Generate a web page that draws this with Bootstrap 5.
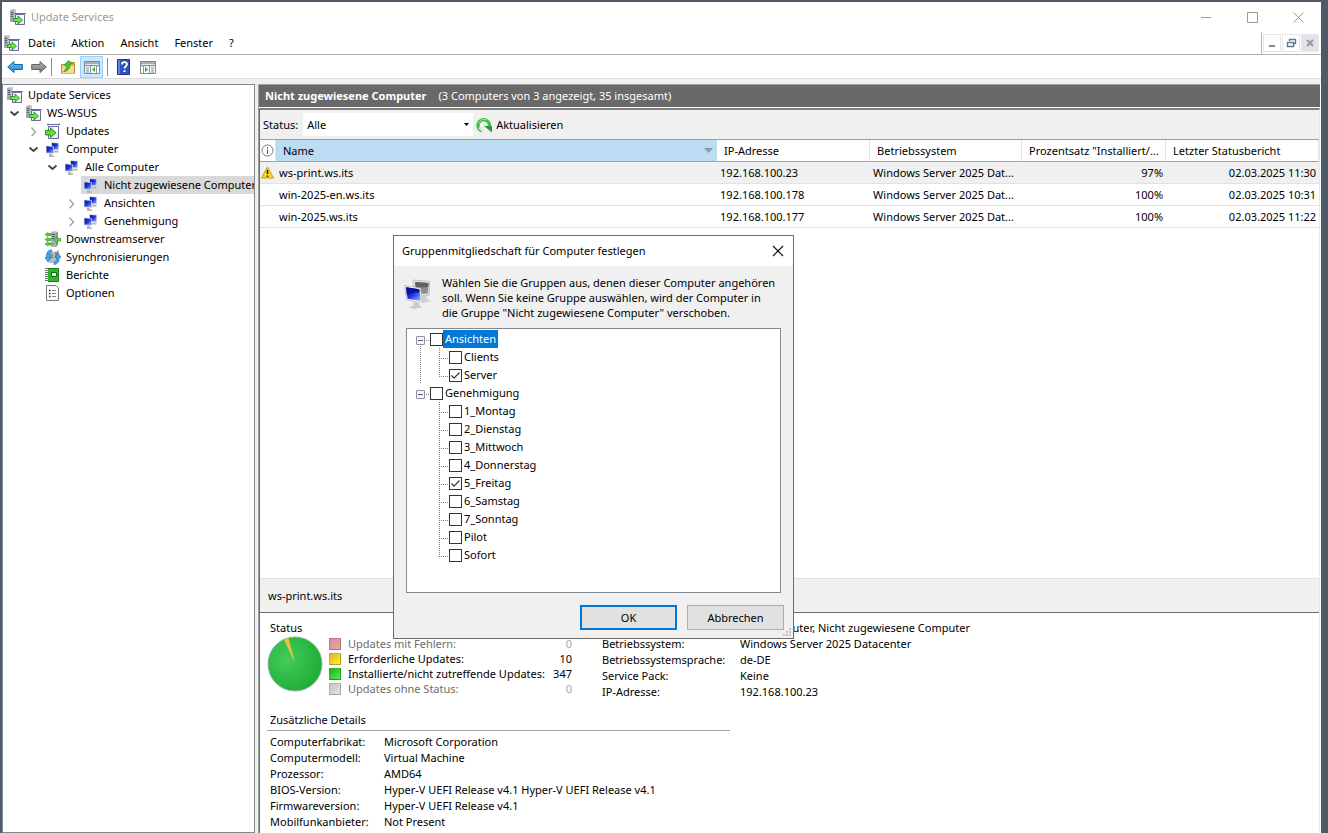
<!DOCTYPE html>
<html lang="de">
<head>
<meta charset="utf-8">
<meta name="viewport" content="width=device-width, initial-scale=1">
<title>Update Services</title>
<link href="https://cdn.jsdelivr.net/npm/bootstrap@5.3.0/dist/css/bootstrap.min.css" rel="stylesheet">
<style>
  :root { --ui-line:#a0a0a0; --ui-dark:#696969; --ui-face:#f0f0f0; --ui-field:#828790; --ui-soft:#e2e2e2; }
  body { font-family:"Noto Sans","Segoe UI",sans-serif; font-size:11px; line-height:16px; color:#000; background:#4f5a69; padding:2px 7px 0 2px; }
  svg { display:block; flex:none; }
  button { font:inherit; color:inherit; }
  ul { list-style:none; margin:0; padding:0; }
  .plain-btn { border:0; background:none; padding:0; }

  .titlebar { height:30px; padding:0 17px 0 8px; gap:5px; color:#999; }
  .window-btns { gap:35px; }
  .menubar { height:23px; }
  .menu-items { border-bottom:1px solid #b4b4b4; border-right:1px solid #b4b4b4; padding-left:2px; }
  .menu-items button { margin-right:16px; }
  .mdi { border-bottom:1px solid #b4b4b4; padding:2px 2px 0 1px; gap:1px; }
  .mdi button { width:18px; height:18px; border:1px solid #e6e6e6; background:#fff; padding:0; }
  .mdi button:last-child { background:#e3e3e3; }
  .toolbar { height:24px; border-bottom:1px solid #dcdcdc; padding-left:5px; }
  .tool-sep { width:1px; height:18px; margin:0 8px 0 4px; background:#8c8c8c; }
  .tool-on { width:23px; height:22px; background:#cce8ff; border:1px solid #99d1ff; padding:0; }
  .workspace { background:var(--ui-face); padding-top:5px; }

  .nav-tree { width:253px; border:1px solid var(--ui-field); background:#fff; padding:1px 0 0 4px; margin-right:3px; overflow:hidden; white-space:nowrap; }
  .node { display:flex; align-items:center; height:18px; }
  .node .twist { width:19px; padding-left:1px; }
  .node span { padding-left:5px; }
  .kids { padding-left:19px; }
  .picked { background:#d9d9d9; margin-left:17px; padding-left:2px; overflow:hidden; }

  .result { border-left:1px solid var(--ui-line); background:#fff; padding-right:1px; }
  .result-head { height:23px; background:var(--ui-dark); border-top:1px solid var(--ui-line); color:#fff; padding-left:6px; margin-bottom:1px; }
  .result-body { border:solid var(--ui-dark); border-width:2px 1px 0 1px; border-top-color:#808080; border-right-color:#e8e8e8; }
  .filterbar { height:30px; background:var(--ui-face); border-bottom:1px solid var(--ui-line); padding-left:3px; }
  .filterbar .form-select { width:170px; height:23px; border:0; border-radius:0; font-size:11px; line-height:16px; padding:0 20px 0 4px; color:#000;
    background:#fff url("data:image/svg+xml,%3Csvg xmlns='http://www.w3.org/2000/svg' viewBox='0 0 5 3'%3E%3Cpath d='M0 0h5L2.5 3z'/%3E%3C/svg%3E") no-repeat right 4px center/5px 3px; margin:0 3px 0 5px; }

  .hosts { table-layout:fixed; border-collapse:separate; border-spacing:0; margin:0; color:#000; }
  .hosts th, .hosts td { height:22px; padding:0 3px; font-weight:400; white-space:nowrap; overflow:hidden; text-overflow:ellipsis; border-bottom:1px solid var(--ui-soft); color:#000; }
  .hosts th { padding-left:7px; border-bottom-color:var(--ui-line); border-right:1px solid var(--ui-soft); }
  .hosts .flag { padding:0 0 0 1px; }
  .hosts th.sorted { background:#bcdcf4; border-right-color:#bcdcf4; }
  .hosts .hot td { background:#f0f0f0; }
  .c-flag { width:16px; } .c-ip { width:153px; } .c-os { width:152px; } .c-pct { width:144px; } .c-date { width:153px; }

  .detail-head { height:35px; background:var(--ui-face); border-top:1px solid var(--ui-soft); border-bottom:1px solid var(--ui-dark); padding-left:8px; }
  .detail { padding:7px 7px 3px; height:220px; }
  .status-part { width:335px; }
  .inset { padding-left:3px; }
  .status-row { gap:6px; }
  .legend { width:243px; }
  .legend td { height:15px; line-height:15px; padding:0; white-space:nowrap; }
  .legend td:first-child { width:19px; }
  .legend .off { color:#6d6d6d; } .legend .off td:last-child { color:#9aa9bd; }
  .swatch { width:12px; height:12px; border:1px solid #0003; }
  .sw-fail { background:linear-gradient(135deg,#d58f98,#eda5a5); }
  .sw-need { background:linear-gradient(135deg,#dfb428,#fdf02c); }
  .sw-done { background:linear-gradient(135deg,#1fae1f,#55f055); }
  .sw-none { background:linear-gradient(135deg,#c4c4c4,#e4e4e4); }
  .facts td, .facts th { padding:0; font-weight:400; white-space:nowrap; }
  .facts th { width:138px; }
  .more { margin-left:3px; }
  .more th { width:114px; }
  .more-head { width:463px; border-bottom:1px solid var(--ui-line); padding:12px 0 2px 3px; margin-bottom:3px; }

  .group-dialog { position:absolute; left:393px; top:235px; width:401px; border:1px solid #6b6b6b; background:var(--ui-face); }
  .dialog-title { height:30px; background:#fff; padding:0 9px 0 8px; }
  .dialog-text { line-height:15px; padding:9px 8px 8px 10px; gap:10px; white-space:nowrap; }
  .group-tree { height:265px; margin:0 12px; border:1px solid var(--ui-field); background:#fff; padding:1px 0 0 9px; }
  .group-row { display:flex; align-items:center; height:18px; }
  .group-row .form-check-input { width:13px; height:13px; margin:0; border:1px solid #333; border-radius:0; background-color:#fff; flex:none; }
  .group-row .form-check-input:checked { background-image:url("data:image/svg+xml,%3Csvg xmlns='http://www.w3.org/2000/svg' viewBox='0 0 11 11'%3E%3Cpath d='M1.5 5.5l2.5 2.7L9.5 2.5' fill='none' stroke='%23333' stroke-width='1.2'/%3E%3C/svg%3E"); }
  .group-row label { padding:0 2px; line-height:18px; }
  .group-row .chosen { background:#0078d7; color:#fff; }
  .fold { width:9px; height:9px; margin-top:3px; border:1px solid #919191; border-radius:1px; background:linear-gradient(#4b63a7,#4b63a7) center/5px 1px no-repeat #f4f4f4; padding:0; }
  .stub { width:5px; height:1px; margin-top:3px; background:repeating-linear-gradient(90deg,transparent 0 1px,#808080 1px 2px); }
  .trunk { background:repeating-linear-gradient(#808080 0 1px,transparent 1px 2px) 4px 14px/1px 100% no-repeat; }
  .leaves { padding-left:23px; }
  .twig { width:10px; height:18px; background:repeating-linear-gradient(90deg,#808080 0 1px,transparent 1px 2px) 0 10px/10px 1px no-repeat, repeating-linear-gradient(#808080 0 1px,transparent 1px 2px) 0 0/1px 100% no-repeat; }
  li:last-child > .group-row > .twig { background-size:10px 1px,1px 11px; }
  .dialog-buttons { padding:12px 9px 8px; gap:10px; }
  .dialog-buttons .btn { width:97px; height:25px; padding:0; font-size:11px; line-height:16px; border:1px solid #adadad; border-radius:0; background:#e1e1e1; color:#000; }
  .dialog-buttons .btn-main { border:2px solid #0078d7; }
  .grip { position:absolute; right:1px; bottom:1px; }
</style>
</head>
<body class="vh-100 d-flex flex-column overflow-hidden">

<svg width="0" height="0" class="position-absolute" aria-hidden="true">
  <defs>
    <linearGradient id="scr" x1="0" y1="0" x2="1" y2="1"><stop offset="0" stop-color="#0a12a8"/><stop offset=".5" stop-color="#1d35d8"/><stop offset="1" stop-color="#9fb6f5"/></linearGradient>
    <linearGradient id="blu" x1="0" y1="0" x2="0" y2="1"><stop offset="0" stop-color="#6cc5f5"/><stop offset="1" stop-color="#1a7fd0"/></linearGradient>
    <linearGradient id="gry" x1="0" y1="0" x2="0" y2="1"><stop offset="0" stop-color="#b5b5b5"/><stop offset="1" stop-color="#777"/></linearGradient>
    <radialGradient id="pieg" cx=".35" cy=".4" r=".7"><stop offset="0" stop-color="#45cc58"/><stop offset="1" stop-color="#1cab38"/></radialGradient>
    <symbol id="i-wsus" viewBox="0 0 16 16">
      <path d="M0 1l2-1h4v13H0z" fill="#c9cdd1"/><path d="M0 1.500h4V13H0z" fill="#a4aab0"/><path d="M1 3.500h2M1 5.500h2M1 7.500h2" stroke="#555f69"/><path d="M1 10.500h1" stroke="#3fbf3f"/>
      <path d="M5.500 5.500h9v10h-9z" fill="#eeeef8" stroke="#6a6aa0"/><path d="M4 4.500h12" stroke="#6a6aa0"/><path d="M9 6h5v5H9z" fill="#fff"/>
      <path d="M3.500 9.500h4.500V7l4.500 4L8 15v-2.500H3.500z" fill="#6be840" stroke="#1c8a1c" stroke-width=".8"/>
    </symbol>
    <symbol id="i-upd" viewBox="0 0 16 16">
      <path d="M3.500 3.500h10v12h-10z" fill="#e9e9f3" stroke="#6a6aa0"/><path d="M2 1.500h13M3 .5v2M14 .5v2" stroke="#6a6aa0"/><path d="M9 4h4v5H9z" fill="#fff"/>
      <path d="M.5 7.500h5V5l5.500 4.700L5.500 14.500V12h-5z" fill="#5fe038" stroke="#1c8a1c" stroke-width=".9"/>
    </symbol>
    <symbol id="i-pcs" viewBox="0 0 16 16">
      <path d="M6 1l8 .8v8L6 9.500z" fill="#d5d8e0"/><path d="M7 2l6.300.6v6L7 8z" fill="url(#scr)"/><path d="M9 10h4l1 1.500H9z" fill="#b4b4b4"/>
      <path d="M1 4.500l8 1v7.500l-8-.7z" fill="#cfd3dc"/><path d="M1.500 5.300l6.700.8v6l-6.700-.6z" fill="url(#scr)"/><path d="M4 13h3v1.500h2V16H4z" fill="#b5b5b5"/>
    </symbol>
    <symbol id="i-down" viewBox="0 0 16 16">
      <path d="M6 1l1-1h5l-1 1v14H6z" fill="#cdd0d3"/><path d="M6 1.500h5V16H6z" fill="#a9aeb3"/><path d="M7 3.500h3M7 5.500h3M7 7.500h3" stroke="#555f69"/><path d="M11 1.500l2-1V14l-2 2z" fill="#8e9499"/><path d="M7 13h2" stroke="#3fbf3f"/>
      <path d="M0 3.500l3-2v1h3v2H3v1zM0 8.500l3-2v1h3v2H3v1zM0 13l3-2v1h3v2H3v1zM9 8.500l3-3v2h4v2.500h-4v2z" fill="#5cd43a" stroke="#2b8e22" stroke-width=".6"/>
    </symbol>
    <symbol id="i-sync" viewBox="0 0 16 16">
      <path d="M4 4l5-2v12H4zM9 3l5-2v12l-5 2z" fill="#b9bdc1"/><path d="M5 6h3M5 8h3M10 4h3M10 6h3M10 8h3" stroke="#555f69"/>
      <path d="M6.500.8C3 1 1 4 1.500 8.500H0L3 13l3-4.500H4.300C4 6 4.500 4 6.500 3z" fill="#3fa9ee" stroke="#1463ab" stroke-width=".6"/>
      <path d="M9 15.500c3.500-.2 5.500-3.500 5.200-7H16l-3-4.500-3 4.500h1.700c.2 2.500-.7 4-2.700 5z" fill="#3fa9ee" stroke="#1463ab" stroke-width=".6"/>
    </symbol>
    <symbol id="i-book" viewBox="0 0 16 16">
      <path d="M1.500 1.500h12v13h-12z" fill="#32b432" stroke="#127a16"/><path d="M6.500 5.500h5v4h-5z" fill="#e9f6e2" stroke="#0e6a12"/><path d="M1.500 1v14" stroke="#fff" stroke-width="3"/><path d="M1.500 1v14" stroke="#5b7a5b" stroke-width="3" stroke-dasharray="1 1"/>
    </symbol>
    <symbol id="i-opt" viewBox="0 0 16 16">
      <path d="M1.500.5h9.500l2.500 2.500v12.500h-12z" fill="#fbfbfb" stroke="#7a7a7a"/><path d="M4 5.500h1.500M4 8.500h1.500M4 11.500h1.500" stroke="#333" stroke-width="1.500"/><path d="M7 5.500h4M7 8.500h4M7 11.500h4" stroke="#888"/>
    </symbol>
    <symbol id="i-open" viewBox="0 0 12 12"><path d="M2.500 4.500L6.500 8l4-3.500" fill="none" stroke="#404040" stroke-width="1.700"/></symbol>
    <symbol id="i-shut" viewBox="0 0 12 12"><path d="M4.500 2.500L8.500 7l-4 4.200" fill="none" stroke="#a6a6a6" stroke-width="1.500"/></symbol>
  </defs>
</svg>

<header class="bg-white">
  <div class="titlebar d-flex align-items-center">
    <svg width="16" height="16"><use href="#i-wsus"/></svg><span class="me-auto">Update Services</span>
    <div class="window-btns d-flex">
      <button class="plain-btn" aria-label="Minimieren"><svg width="11" height="11"><path d="M0 5.500h10" stroke="#999"/></svg></button>
      <button class="plain-btn" aria-label="Maximieren"><svg width="11" height="11"><path d="M.5.5h10v10H.5z" fill="none" stroke="#999"/></svg></button>
      <button class="plain-btn" aria-label="Schließen"><svg width="11" height="11"><path d="M.5.5l10 10M10.500.5l-10 10" stroke="#999"/></svg></button>
    </div>
  </div>
  <div class="menubar d-flex">
    <nav class="menu-items d-flex align-items-center flex-grow-1">
      <svg width="16" height="16" class="me-2"><use href="#i-wsus"/></svg>
      <button class="plain-btn">Datei</button><button class="plain-btn">Aktion</button><button class="plain-btn">Ansicht</button><button class="plain-btn">Fenster</button><button class="plain-btn">?</button>
    </nav>
    <div class="mdi d-flex">
      <button aria-label="Minimieren"><svg width="16" height="16"><path d="M5 11h6" stroke="#76879a" stroke-width="2"/></svg></button>
      <button aria-label="Wiederherstellen"><svg width="16" height="16"><path d="M4.500 7.500h6v4h-6zM4 7.500h7M6.500 6V4.500h6v4H11" fill="none" stroke="#66788c" stroke-width="1.400"/></svg></button>
      <button aria-label="Schließen"><svg width="16" height="16"><path d="M5 5l6 6M11 5l-6 6" stroke="#8b9db2" stroke-width="2.200"/></svg></button>
    </div>
  </div>
  <div class="toolbar d-flex align-items-center">
    <button class="plain-btn" aria-label="Zurück"><svg width="16" height="16"><path d="M.7 8L7 2.500v3h8.300v5H7v3z" fill="url(#blu)" stroke="#1769ad"/></svg></button>
    <button class="plain-btn ms-2" aria-label="Vorwärts"><svg width="16" height="16"><path d="M15.300 8L9 2.500v3H.7v5H9v3z" fill="url(#gry)" stroke="#666"/></svg></button>
    <span class="tool-sep"></span>
    <button class="plain-btn" aria-label="Eine Ebene nach oben"><svg width="16" height="16"><path d="M1.500 5.500h5l1-2h7v11h-13z" fill="#e9bf62" stroke="#b98d35"/><path d="M2 7h12v7.500H2z" fill="#f8dc8e"/><path d="M3.500 12.500C5.500 11.500 6.500 9 6.300 6H4L8.500 1.500 13 5h-2.800c0 4-2.200 7.500-6.700 7.500z" fill="#4cc532" stroke="#1f8417" stroke-width=".6"/></svg></button>
    <button class="tool-on ms-1 d-flex align-items-center justify-content-center" aria-label="Konsolenstruktur"><svg width="16" height="16"><path d="M.5 2.500h15v12H.5z" fill="#fff" stroke="#7f868e"/><path d="M1 4h14M1 6.500h14" stroke="#8d949b" stroke-width="1.500"/><path d="M6.500 7v7M12.500 7v7" stroke="#8d949b"/><path d="M2 9h3M2 11h3M2 13h3" stroke="#5b8fc6"/><path d="M11 8v5L8 10.500z" fill="#2fae2f"/></svg></button>
    <span class="tool-sep"></span>
    <button class="plain-btn" aria-label="Hilfe"><svg width="16" height="16"><path d="M1.500.5h12v15h-12z" fill="#2f55bd" stroke="#1c3489"/><path d="M2 1h2v14H2z" fill="#5f84dc"/><path d="M6 5.500c0-3 5-3 5-.2 0 2-2.500 2-2.500 4.200" fill="none" stroke="#fff" stroke-width="1.800"/><path d="M7.500 11.200h2V13h-2z" fill="#fff"/></svg></button>
    <button class="plain-btn ms-2" aria-label="Aktionsbereich"><svg width="16" height="16"><path d="M.5 2.500h15v12H.5z" fill="#fff" stroke="#7f868e"/><path d="M1 4h14M1 6.500h14" stroke="#8d949b" stroke-width="1.500"/><path d="M3.500 7v7M9.500 7v7" stroke="#8d949b"/><path d="M11 9h3M11 11h3M11 13h3" stroke="#6ca06c"/><path d="M5 8v5l3-2.500z" fill="#2fae2f"/></svg></button>
  </div>
</header>

<div class="workspace d-flex flex-grow-1 overflow-hidden">
  <nav class="nav-tree flex-shrink-0">
    <div class="node"><svg width="16" height="16"><use href="#i-wsus"/></svg><span>Update Services</span></div>
    <ul>
      <li><div class="node"><div class="twist"><svg width="12" height="12"><use href="#i-open"/></svg></div><svg width="16" height="16"><use href="#i-wsus"/></svg><span>WS-WSUS</span></div>
        <ul class="kids">
          <li><div class="node"><div class="twist"><svg width="12" height="12"><use href="#i-shut"/></svg></div><svg width="16" height="16"><use href="#i-upd"/></svg><span>Updates</span></div></li>
          <li><div class="node"><div class="twist"><svg width="12" height="12"><use href="#i-open"/></svg></div><svg width="16" height="16"><use href="#i-pcs"/></svg><span>Computer</span></div>
            <ul class="kids">
              <li><div class="node"><div class="twist"><svg width="12" height="12"><use href="#i-open"/></svg></div><svg width="16" height="16"><use href="#i-pcs"/></svg><span>Alle Computer</span></div>
                <ul class="kids">
                  <li><div class="node picked"><svg width="16" height="16"><use href="#i-pcs"/></svg><span>Nicht zugewiesene Computer</span></div></li>
                  <li><div class="node"><div class="twist"><svg width="12" height="12"><use href="#i-shut"/></svg></div><svg width="16" height="16"><use href="#i-pcs"/></svg><span>Ansichten</span></div></li>
                  <li><div class="node"><div class="twist"><svg width="12" height="12"><use href="#i-shut"/></svg></div><svg width="16" height="16"><use href="#i-pcs"/></svg><span>Genehmigung</span></div></li>
                </ul></li>
            </ul></li>
          <li><div class="node"><div class="twist"></div><svg width="16" height="16"><use href="#i-down"/></svg><span>Downstreamserver</span></div></li>
          <li><div class="node"><div class="twist"></div><svg width="16" height="16"><use href="#i-sync"/></svg><span>Synchronisierungen</span></div></li>
          <li><div class="node"><div class="twist"></div><svg width="16" height="16"><use href="#i-book"/></svg><span>Berichte</span></div></li>
          <li><div class="node"><div class="twist"></div><svg width="16" height="16"><use href="#i-opt"/></svg><span>Optionen</span></div></li>
        </ul></li>
    </ul>
  </nav>

  <main class="result d-flex flex-column flex-grow-1 overflow-hidden">
    <div class="result-head d-flex align-items-center flex-shrink-0"><b>Nicht zugewiesene Computer</b><span class="ms-2 ps-1">(3 Computers von 3 angezeigt, 35 insgesamt)</span></div>
    <div class="result-body d-flex flex-column flex-grow-1">
      <div class="filterbar d-flex align-items-center flex-shrink-0">
        <label for="statusFilter">Status:</label>
        <select id="statusFilter" class="form-select"><option>Alle</option><option>Fehlerhaft</option></select>
        <button class="plain-btn d-flex align-items-center"><svg width="16" height="16" class="me-1"><path d="M6 13.800A5.700 5.700 0 1 1 13.300 9.500" fill="none" stroke="#43bd43" stroke-width="3.400"/><path d="M8 9h8v6.500z" fill="#2a9d2f"/><path d="M2.500 6.500a6 6 0 0 1 8-3.800" fill="none" stroke="#98e698"/><path d="M3 10.500l3.500 3.300" stroke="#d8f0d8" stroke-width="2"/></svg>Aktualisieren</button>
      </div>
      <div class="flex-grow-1">
        <table class="hosts w-100">
          <colgroup><col class="c-flag"><col><col class="c-ip"><col class="c-os"><col class="c-pct"><col class="c-date"></colgroup>
          <thead><tr>
            <th class="flag"><svg width="13" height="13"><circle cx="6.500" cy="6.500" r="5.500" fill="#fff" stroke="#777"/><path d="M6.500 3v1.500M6.500 5.500V10" stroke="#555"/></svg></th>
            <th class="sorted"><div class="d-flex align-items-center justify-content-between">Name<svg width="9" height="5"><path d="M0 0h9L4.500 5z" fill="#8f9aa3"/></svg></div></th>
            <th>IP-Adresse</th><th>Betriebssystem</th><th>Prozentsatz "Installiert/...</th><th>Letzter Statusbericht</th>
          </tr></thead>
          <tbody>
            <tr class="hot"><td class="flag"><svg width="13" height="13"><path d="M6.500 1L12.500 12H.5z" fill="#fbd72b" stroke="#c69a10" stroke-linejoin="round"/><path d="M6.500 4v4M6.500 9.500V11" stroke="#222" stroke-width="1.600"/></svg></td><td>ws-print.ws.its</td><td>192.168.100.23</td><td>Windows Server 2025 Dat...</td><td class="text-end">97%</td><td class="text-end">02.03.2025 11:30</td></tr>
            <tr><td></td><td>win-2025-en.ws.its</td><td>192.168.100.178</td><td>Windows Server 2025 Dat...</td><td class="text-end">100%</td><td class="text-end">02.03.2025 10:31</td></tr>
            <tr><td></td><td>win-2025.ws.its</td><td>192.168.100.177</td><td>Windows Server 2025 Dat...</td><td class="text-end">100%</td><td class="text-end">02.03.2025 11:22</td></tr>
          </tbody>
        </table>
      </div>
      <div class="detail-head d-flex align-items-center flex-shrink-0">ws-print.ws.its</div>
      <section class="detail flex-shrink-0">
        <div class="d-flex">
          <div class="status-part">
            <div class="inset">Status</div>
            <div class="status-row d-flex">
              <svg width="56" height="56" role="img" aria-label="Statusdiagramm"><circle cx="28" cy="28" r="27" fill="url(#pieg)" stroke="#8ab890"/><path d="M28 27L17 3.500A27 27 0 0 1 21.500 2z" fill="#ecc445"/></svg>
              <table class="legend">
                <tr class="off"><td><div class="swatch sw-fail"></div></td><td>Updates mit Fehlern:</td><td class="text-end">0</td></tr>
                <tr><td><div class="swatch sw-need"></div></td><td>Erforderliche Updates:</td><td class="text-end">10</td></tr>
                <tr><td><div class="swatch sw-done"></div></td><td>Installierte/nicht zutreffende Updates:</td><td class="text-end">347</td></tr>
                <tr class="off"><td><div class="swatch sw-none"></div></td><td>Updates ohne Status:</td><td class="text-end">0</td></tr>
              </table>
            </div>
          </div>
          <table class="facts">
            <tr><th>Mitgliedschaft:</th><td>Alle Computer, Nicht zugewiesene Computer</td></tr>
            <tr><th>Betriebssystem:</th><td>Windows Server 2025 Datacenter</td></tr>
            <tr><th>Betriebssystemsprache:</th><td>de-DE</td></tr>
            <tr><th>Service Pack:</th><td>Keine</td></tr>
            <tr><th>IP-Adresse:</th><td>192.168.100.23</td></tr>
          </table>
        </div>
        <div class="more-head">Zusätzliche Details</div>
        <table class="facts more">
          <tr><th>Computerfabrikat:</th><td>Microsoft Corporation</td></tr>
          <tr><th>Computermodell:</th><td>Virtual Machine</td></tr>
          <tr><th>Prozessor:</th><td>AMD64</td></tr>
          <tr><th>BIOS-Version:</th><td>Hyper-V UEFI Release v4.1 Hyper-V UEFI Release v4.1</td></tr>
          <tr><th>Firmwareversion:</th><td>Hyper-V UEFI Release v4.1</td></tr>
          <tr><th>Mobilfunkanbieter:</th><td>Not Present</td></tr>
        </table>
      </section>
    </div>
  </main>
</div>

<div class="group-dialog" role="dialog" aria-labelledby="dlgTitle">
  <div class="dialog-title d-flex align-items-center justify-content-between"><span id="dlgTitle">Gruppenmitgliedschaft für Computer festlegen</span>
    <button class="plain-btn" aria-label="Schließen"><svg width="12" height="12"><path d="M1 1l10 10M11 1L1 11" stroke="#111" stroke-width="1.100"/></svg></button></div>
  <div class="dialog-text d-flex">
    <svg width="28" height="32" viewBox="0 0 28 32" class="mt-1">
      <path d="M9 1l17 1.500-1 14-15 1z" fill="#e3e3e3" stroke="#aaa" stroke-width=".6"/><path d="M11 3l13.500 1-.7 10.500L12 15z" fill="#8e8e8e"/><path d="M11 3l13.500 1-.3 4L12 9z" fill="#606060"/><path d="M17 17h6v3l4 2-8 2z" fill="#cfcfcf"/>
      <path d="M.5 6.500l16 2.500 2 14.500-16-2.500z" fill="#eef0f5" stroke="#a9adb8" stroke-width=".6"/><path d="M2 8.300l13.200 2 1.600 11.500-13.200-2z" fill="url(#scr)"/><path d="M2 8.300l13.200 2 .4 3c-5-.5-9 1-12.700 3z" fill="#0b12a0"/><path d="M9 23l6 .9.500 3 3 1.500-9 1.600-5-2 5-1.500z" fill="#cacaca"/>
    </svg>
    <div>Wählen Sie die Gruppen aus, denen dieser Computer angehören<br>soll. Wenn Sie keine Gruppe auswählen, wird der Computer in<br>die Gruppe "Nicht zugewiesene Computer" verschoben.</div>
  </div>
  <ul class="group-tree">
    <li class="trunk"><div class="group-row"><button class="fold" aria-label="Reduzieren"></button><span class="stub"></span><input class="form-check-input" type="checkbox" id="g1"><label for="g1" class="chosen">Ansichten</label></div>
      <ul class="leaves">
        <li><div class="group-row"><span class="twig"></span><input class="form-check-input" type="checkbox" id="g2"><label for="g2">Clients</label></div></li>
        <li><div class="group-row"><span class="twig"></span><input class="form-check-input" type="checkbox" id="g3" checked><label for="g3">Server</label></div></li>
      </ul></li>
    <li><div class="group-row"><button class="fold" aria-label="Reduzieren"></button><span class="stub"></span><input class="form-check-input" type="checkbox" id="g4"><label for="g4">Genehmigung</label></div>
      <ul class="leaves">
        <li><div class="group-row"><span class="twig"></span><input class="form-check-input" type="checkbox" id="d1"><label for="d1">1_Montag</label></div></li>
        <li><div class="group-row"><span class="twig"></span><input class="form-check-input" type="checkbox" id="d2"><label for="d2">2_Dienstag</label></div></li>
        <li><div class="group-row"><span class="twig"></span><input class="form-check-input" type="checkbox" id="d3"><label for="d3">3_Mittwoch</label></div></li>
        <li><div class="group-row"><span class="twig"></span><input class="form-check-input" type="checkbox" id="d4"><label for="d4">4_Donnerstag</label></div></li>
        <li><div class="group-row"><span class="twig"></span><input class="form-check-input" type="checkbox" id="d5" checked><label for="d5">5_Freitag</label></div></li>
        <li><div class="group-row"><span class="twig"></span><input class="form-check-input" type="checkbox" id="d6"><label for="d6">6_Samstag</label></div></li>
        <li><div class="group-row"><span class="twig"></span><input class="form-check-input" type="checkbox" id="d7"><label for="d7">7_Sonntag</label></div></li>
        <li><div class="group-row"><span class="twig"></span><input class="form-check-input" type="checkbox" id="d8"><label for="d8">Pilot</label></div></li>
        <li><div class="group-row"><span class="twig"></span><input class="form-check-input" type="checkbox" id="d9"><label for="d9">Sofort</label></div></li>
      </ul></li>
  </ul>
  <div class="dialog-buttons d-flex justify-content-end"><button class="btn btn-main">OK</button><button class="btn">Abbrechen</button></div>
  <svg class="grip" width="9" height="9"><path d="M6 0h2v2H6zM3 3h2v2H3zM6 3h2v2H6zM0 6h2v2H0zM3 6h2v2H3zM6 6h2v2H6z" fill="#bfbfbf"/></svg>
</div>

<script src="https://cdn.jsdelivr.net/npm/bootstrap@5.3.0/dist/js/bootstrap.bundle.min.js"></script>
</body>
</html>
